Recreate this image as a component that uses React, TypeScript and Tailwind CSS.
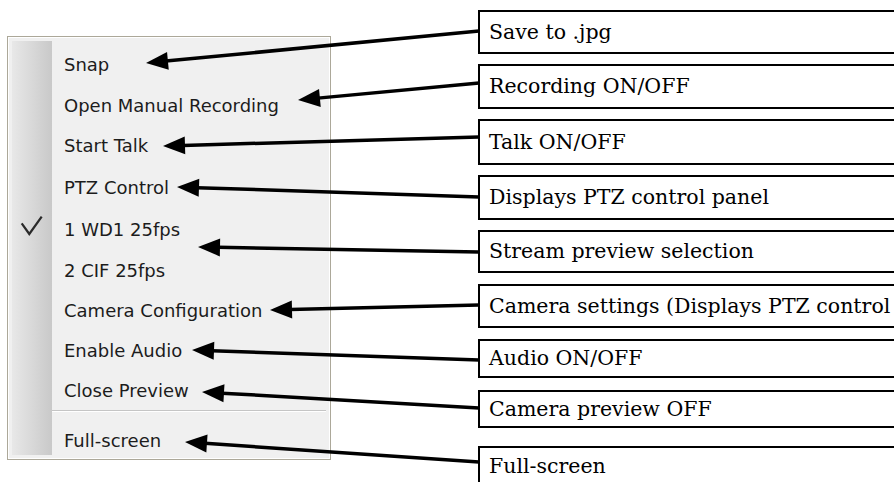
import React from "react";

type Row = { label?: string; h: string; check?: boolean; sep?: boolean; extra?: string };

const rows: Row[] = [
  { h: "h-[3px]" },
  { label: "Snap", h: "h-[41px]" },
  { label: "Open Manual Recording", h: "h-[40px]" },
  { label: "Start Talk", h: "h-[41px]" },
  { label: "PTZ Control", h: "h-[43px]" },
  { label: "1 WD1 25fps", h: "h-[41px]", check: true },
  { label: "2 CIF 25fps", h: "h-[40px]" },
  { label: "Camera Configuration", h: "h-[40px]" },
  { label: "Enable Audio", h: "h-[41px]" },
  { label: "Close Preview", h: "h-[39px]" },
  { h: "h-[2px]", sep: true },
  { label: "Full-screen", h: "h-[43px]", extra: "pt-[14px]" },
];

const boxes = [
  { text: "Save to .jpg", cls: "mt-[10px] h-[44px]" },
  { text: "Recording ON/OFF", cls: "mt-[10px] h-[45px]" },
  { text: "Talk ON/OFF", cls: "mt-[10px] h-[46px]" },
  { text: "Displays PTZ control panel", cls: "mt-[10px] h-[45px]" },
  { text: "Stream preview selection", cls: "mt-[10px] h-[43px]" },
  { text: "Camera settings (Displays PTZ control", cls: "mt-[11px] h-[44px]" },
  { text: "Audio ON/OFF", cls: "mt-[11px] h-[39px]" },
  { text: "Camera preview OFF", cls: "mt-[12px] h-[38px]" },
  { text: "Full-screen", cls: "mt-[18px] h-[40px]" },
];

const arrows: [number, number, number, number][] = [
  [479, 31, 146, 63],
  [479, 83, 298, 100],
  [479, 137, 163, 146],
  [479, 197, 177, 187],
  [479, 252, 198, 247],
  [479, 305, 270, 310],
  [479, 360, 192, 350],
  [479, 408, 202, 392],
  [479, 462, 185, 442],
];

function Arrow({ a }: { a: [number, number, number, number] }) {
  const [x1, y1, x2, y2] = a;
  const len = 22;
  const hw = 9;
  const dx = x1 - x2;
  const dy = y1 - y2;
  const d = Math.hypot(dx, dy);
  const ux = dx / d;
  const uy = dy / d;
  const bx = x2 + ux * len;
  const by = y2 + uy * len;
  const px = -uy;
  const py = ux;
  const pts = `${x2},${y2} ${bx + px * hw},${by + py * hw} ${bx - px * hw},${by - py * hw}`;
  return (
    <g>
      <line x1={x1} y1={y1} x2={bx - ux * 2} y2={by - uy * 2} stroke="#000" strokeWidth={3.5} />
      <polygon points={pts} fill="#000" />
    </g>
  );
}

export default function App() {
  return (
    <div className="w-[894px] h-[482px] relative overflow-hidden bg-white flex items-start">
      <div className="ml-[7px] mt-[36px] w-[324px] shrink-0 border border-[#aca899] bg-white">
        <div className="border border-white bg-[#f0f0f0] p-[3px] font-['DejaVu_Sans',sans-serif] text-[18px] text-[#1c1c1c]">
          {rows.map((r, i) => (
            <div key={i} className={`flex ${r.h}`}>
              <div className="w-[40px] shrink-0 bg-linear-to-r from-[#e8e8e8] to-[#c9c9c9]">
                {r.check && (
                  <svg width="40" height="41" viewBox="0 0 40 41" className="block">
                    <path d="M9.7 14.3 L17.3 25 L29.7 7.7" fill="none" stroke="#2a2a2a" strokeWidth="2.2" />
                  </svg>
                )}
              </div>
              {r.sep ? (
                <div className="flex-1 flex flex-col">
                  <div className="h-[1px] bg-[#c5c5c5]" />
                  <div className="h-[1px] bg-white" />
                </div>
              ) : (
                <div className={`flex-1 flex items-center pl-[12px] whitespace-nowrap ${r.extra ?? ""}`}>
                  {r.label}
                </div>
              )}
            </div>
          ))}
        </div>
      </div>

      <div className="ml-[147px] flex flex-col shrink-0 font-['DejaVu_Serif',serif] text-[20.5px] text-black">
        {boxes.map((b, i) => (
          <div
            key={i}
            className={`${b.cls} w-[440px] shrink-0 border-2 border-black bg-white flex items-center pl-[9px] whitespace-nowrap overflow-hidden`}
          >
            {b.text}
          </div>
        ))}
      </div>

      <svg className="absolute inset-0 pointer-events-none" width="894" height="482" viewBox="0 0 894 482">
        {arrows.map((a, i) => (
          <Arrow key={i} a={a} />
        ))}
      </svg>
    </div>
  );
}
